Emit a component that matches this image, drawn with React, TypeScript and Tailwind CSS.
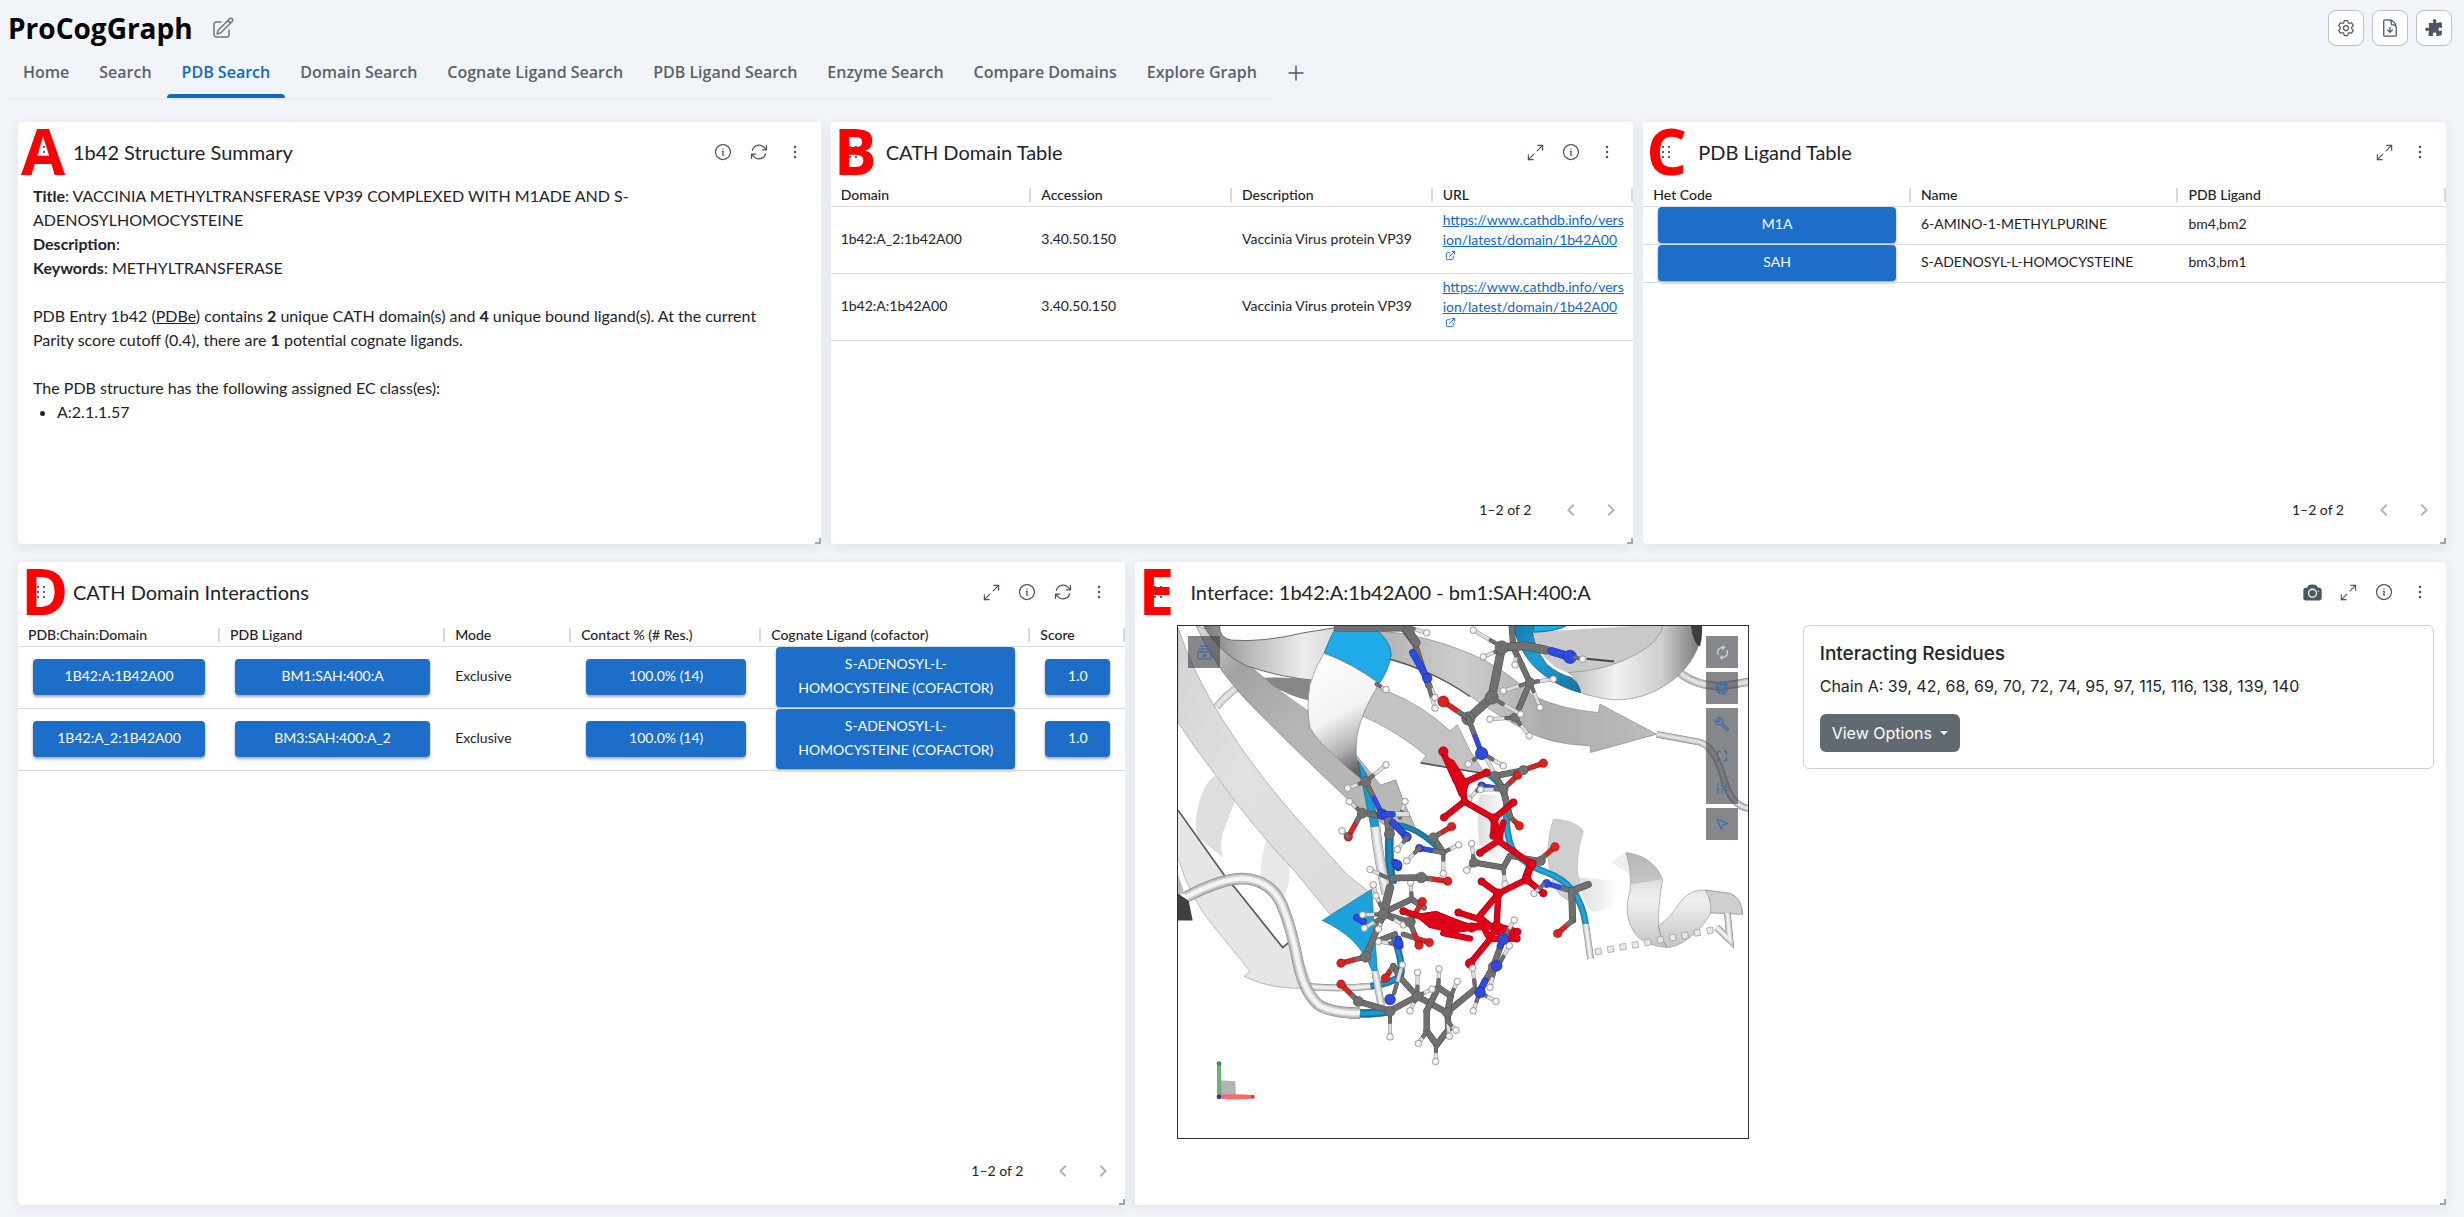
import React from 'react';
import {
  HiOutlineArrowPath,
  HiOutlinePencilSquare,
  HiOutlineCog6Tooth,
  HiOutlineDocumentArrowDown,
  HiPuzzlePiece,
  HiCamera,
  HiOutlineInformationCircle,
  HiEllipsisVertical,
} from 'react-icons/hi2';
import {
  MdAutorenew,
  MdCamera,
  MdOutlineBuild,
  MdFullscreen,
  MdOutlineSubscriptions,
  MdChevronLeft,
  MdChevronRight,
} from 'react-icons/md';
import { Maximize2, ExternalLink, Plus, SlidersVertical, MousePointer2 } from 'lucide-react';

/* ---------- page header ---------- */

const TABS = [
  'Home',
  'Search',
  'PDB Search',
  'Domain Search',
  'Cognate Ligand Search',
  'PDB Ligand Search',
  'Enzyme Search',
  'Compare Domains',
  'Explore Graph',
];

function ToolButton({ label, children }: { label: string; children: React.ReactNode }) {
  return (
    <button
      aria-label={label}
      className="flex size-9 items-center justify-center rounded-lg border border-[#bbc0c7] bg-white text-[#4d5661]"
    >
      {children}
    </button>
  );
}

function Header() {
  return (
    <header className="font-['Open_Sans',sans-serif]">
      <div className="flex h-[46px] items-end justify-between pl-2 pr-3">
        <div className="flex items-center gap-[18px]">
          <h1 className="text-[28px] leading-9 font-bold text-black">ProCogGraph</h1>
          <button aria-label="Edit title" className="text-[#6f757e]">
            <HiOutlinePencilSquare size={24} />
          </button>
        </div>
        <div className="flex gap-2">
          <ToolButton label="Settings">
            <HiOutlineCog6Tooth size={20} />
          </ToolButton>
          <ToolButton label="Download">
            <HiOutlineDocumentArrowDown size={20} />
          </ToolButton>
          <ToolButton label="Extensions">
            <HiPuzzlePiece size={20} />
          </ToolButton>
        </div>
      </div>
      <nav className="flex h-[54px] items-stretch pl-2">
        <div className="flex border-b-2 border-[#e9edf1]">
          {TABS.map((t) => (
            <button
              key={t}
              className={
                t === 'PDB Search'
                  ? 'relative px-[15px] text-base font-semibold text-[#1068cb]'
                  : 'relative px-[15px] text-base font-semibold text-[#59616c]'
              }
            >
              {t}
              {t === 'PDB Search' && (
                <span className="absolute inset-x-0 bottom-0 h-1 rounded-t-sm bg-[#1068cb]" />
              )}
            </button>
          ))}
        </div>
        <button aria-label="Add page" className="px-3 text-[#4d5661]">
          <Plus size={24} strokeWidth={1.5} />
        </button>
      </nav>
    </header>
  );
}

/* ---------- cards ---------- */

type Tool = 'camera' | 'expand' | 'info' | 'refresh' | 'menu';

const TOOL_ICON: Record<Tool, React.ReactNode> = {
  camera: <HiCamera size={21} />,
  expand: <Maximize2 size={19} strokeWidth={1.5} />,
  info: <HiOutlineInformationCircle size={20} />,
  refresh: <HiOutlineArrowPath size={20} />,
  menu: <HiEllipsisVertical size={20} />,
};

function DragDots() {
  return (
    <svg width="12" height="16" viewBox="0 0 12 16" className="fill-[#5c646e]" aria-hidden="true">
      {[2, 7, 12].map((y) => (
        <React.Fragment key={y}>
          <rect x="2" y={y} width="2" height="2" />
          <rect x="8" y={y} width="2" height="2" />
        </React.Fragment>
      ))}
    </svg>
  );
}

function Card({
  letter,
  title,
  tools,
  className,
  children,
}: {
  letter: string;
  title: string;
  tools: Tool[];
  className: string;
  children: React.ReactNode;
}) {
  return (
    <section
      className={`relative flex flex-col rounded bg-white text-[#1e2229] shadow-[0_3px_10px_2px_rgba(60,70,90,0.07)] ${className}`}
    >
      <div className="mb-0.5 flex h-[60px] items-center pr-2">
        <div className="flex w-[55px] justify-center pr-[10px]">
          <DragDots />
        </div>
        <h2 className="flex-1 text-xl">{title}</h2>
        {tools.map((t) => (
          <button
            key={t}
            aria-label={t}
            className="flex size-9 items-center justify-center text-[#4d5661]"
          >
            {TOOL_ICON[t]}
          </button>
        ))}
      </div>
      <span className="absolute top-[3px] left-[3px] font-['Open_Sans',sans-serif] text-[64px] leading-[52px] font-bold text-[#ff0000]">
        {letter}
      </span>
      {children}
      <span className="absolute right-0 bottom-0 size-[6px] border-r-2 border-b-2 border-[#a3a6aa]" />
    </section>
  );
}

function Pager() {
  return (
    <div className="mt-auto flex h-[68px] items-center justify-end pr-0.5 text-sm">
      <span className="mr-5">1–2 of 2</span>
      <button aria-label="Previous page" className="flex size-10 items-center justify-center text-[#b4b4b4]">
        <MdChevronLeft size={24} />
      </button>
      <button aria-label="Next page" className="flex size-10 items-center justify-center text-[#b4b4b4]">
        <MdChevronRight size={24} />
      </button>
    </div>
  );
}

function Table({
  cols,
  rowClass,
  rows,
}: {
  cols: { name: string; width: string }[];
  rowClass: string;
  rows: React.ReactNode[][];
}) {
  return (
    <table className="w-full table-fixed border-collapse text-left text-sm">
      <thead>
        <tr className="h-[22px] border-b border-[#dcdcdc]">
          {cols.map((c) => (
            <th key={c.name} className={`p-0 font-medium ${c.width}`}>
              <div className="flex h-[14px] items-center border-r-2 border-[#d9d9d9] pl-[10px] whitespace-nowrap">
                {c.name}
              </div>
            </th>
          ))}
        </tr>
      </thead>
      <tbody>
        {rows.map((r, i) => (
          <tr key={i} className={`border-b border-[#dcdcdc] ${rowClass}`}>
            {r.map((cell, j) => (
              <td key={j} className="p-0 align-middle">
                {cell}
              </td>
            ))}
          </tr>
        ))}
      </tbody>
    </table>
  );
}

function Txt({ children }: { children: React.ReactNode }) {
  return <div className="px-[10px] pb-0.5">{children}</div>;
}

function Btn({ children }: { children: React.ReactNode }) {
  return (
    <div className="px-[15px]">
      <button className="block w-full rounded bg-[#1c6ec9] px-4 pt-[5px] pb-[7px] text-center leading-6 text-white shadow-[0_2px_3px_rgba(0,0,0,0.35)]">
        {children}
      </button>
    </div>
  );
}

function DomainLink() {
  return (
    <div className="pb-2 pl-[10px]">
      <a href="https://www.cathdb.info/version/latest/domain/1b42A00" className="block text-[#1068cb]">
        <span className="block leading-5 underline">
          https://www.cathdb.info/vers
          <br />
          ion/latest/domain/1b42A00
        </span>
        <ExternalLink size={11} className="ml-0.5" />
      </a>
    </div>
  );
}

/* ---------- 3D structure drawing ---------- */

type Seg = [number, number, number, number];
type Dot = [number, number];

const C = '#707070';
const N = '#2f4ae0';
const O = '#dd2020';
const H = '#dedede';
const L = '#e00018';

function Bonds({ color, edge, w, segs }: { color: string; edge: string; w: number; segs: Seg[] }) {
  return (
    <g strokeLinecap="round">
      {segs.map(([a, b, c, d], i) => (
        <line key={i} x1={a} y1={b} x2={c} y2={d} stroke={edge} strokeWidth={w + 3} />
      ))}
      {segs.map(([a, b, c, d], i) => (
        <line key={i} x1={a} y1={b} x2={c} y2={d} stroke={color} strokeWidth={w} />
      ))}
    </g>
  );
}

function Balls({ color, edge, r, at }: { color: string; edge: string; r: number; at: Dot[] }) {
  return (
    <g fill={color} stroke={edge} strokeWidth={2}>
      {at.map(([x, y], i) => (
        <circle key={i} cx={x} cy={y} r={r} />
      ))}
    </g>
  );
}

/* a bond from carbon to a hydrogen: grey near the carbon, pale towards the hydrogen at the far end */
function Hyd({ segs }: { segs: Seg[] }) {
  return (
    <>
      <Bonds color={H} edge="#8a8a8a" w={9} segs={segs} />
      <Bonds
        color={C}
        edge="#555555"
        w={9}
        segs={segs.map(([a, b, c, d]) => [a, b, a + (c - a) * 0.35, b + (d - b) * 0.35] as Seg)}
      />
      <Balls color="#ececec" edge="#777" r={10} at={segs.map((s) => [s[2], s[3]] as Dot)} />
      <Balls color="#fff" edge="none" r={4} at={segs.map((s) => [s[2] - 1, s[3] - 1] as Dot)} />
    </>
  );
}

/* a bond from carbon to another element, coloured half and half */
function Hetero({ color, segs, r = 13 }: { color: string; segs: Seg[]; r?: number }) {
  return (
    <>
      <Bonds color={C} edge="#4a4a4a" w={13} segs={segs} />
      <Bonds
        color={color}
        edge="none"
        w={14}
        segs={segs.map(([a, b, c, d]) => [(a + c) / 2, (b + d) / 2, c, d] as Seg)}
      />
      <Balls color={color} edge="#0006" r={r} at={segs.map((s) => [s[2], s[3]] as Dot)} />
    </>
  );
}

function Tube({ d, w, color = '#bdbdbd', light = '#f0f0f0' }: { d: string; w: number; color?: string; light?: string }) {
  return (
    <g fill="none">
      <path d={d} stroke="#7c7c7c" strokeWidth={w + 2} />
      <path d={d} stroke={color} strokeWidth={w} />
      <path d={d} stroke={light} strokeWidth={w * 0.7} opacity="0.5" />
      <path d={d} stroke={light} strokeWidth={w * 0.4} />
    </g>
  );
}

const DASHES: Dot[] = [
  [1285, 1002], [1322, 995], [1359, 988], [1396, 982], [1433, 975],
  [1471, 967], [1508, 960], [1545, 954], [1582, 946], [1620, 939],
];

function Structure() {
  return (
    <svg viewBox="24 24 1710 1539" preserveAspectRatio="xMidYMid slice" className="block size-full" role="img" aria-label="Protein interface">
      <defs>
        <linearGradient id="gA" x1="0" y1="0" x2="1" y2="1">
          <stop offset="0" stopColor="#d2d2d2" />
          <stop offset="0.4" stopColor="#e0e0e0" />
          <stop offset="1" stopColor="#dcdcdc" />
        </linearGradient>
        <linearGradient id="gB" x1="0" y1="0" x2="1" y2="1">
          <stop offset="0" stopColor="#dcdcdc" />
          <stop offset="0.2" stopColor="#a2a2a2" />
          <stop offset="0.45" stopColor="#b4b4b4" />
          <stop offset="1" stopColor="#b9b9b9" />
        </linearGradient>
        <linearGradient id="gC" x1="0" y1="0" x2="1" y2="0">
          <stop offset="0" stopColor="#777" />
          <stop offset="0.3" stopColor="#b4b4b4" />
          <stop offset="0.75" stopColor="#ececec" />
          <stop offset="1" stopColor="#d8d8d8" />
        </linearGradient>
        <linearGradient id="gD" x1="0" y1="0" x2="0.3" y2="1">
          <stop offset="0" stopColor="#ffffff" />
          <stop offset="0.55" stopColor="#f3f3f3" />
          <stop offset="0.82" stopColor="#b0b0b0" />
          <stop offset="1" stopColor="#666" />
        </linearGradient>
        <linearGradient id="gE" x1="0" y1="0" x2="1" y2="0">
          <stop offset="0" stopColor="#bcbcbc" />
          <stop offset="0.35" stopColor="#f2f2f2" />
          <stop offset="0.7" stopColor="#cfcfcf" />
          <stop offset="1" stopColor="#747474" />
        </linearGradient>
        <linearGradient id="gF" x1="0" y1="0" x2="1" y2="0">
          <stop offset="0" stopColor="#b4b4b4" />
          <stop offset="0.3" stopColor="#cdcdcd" />
          <stop offset="0.6" stopColor="#adadad" />
          <stop offset="1" stopColor="#bdbdbd" />
        </linearGradient>
        <linearGradient id="gG" x1="0" y1="0" x2="0" y2="1">
          <stop offset="0" stopColor="#c4c4c4" />
          <stop offset="0.5" stopColor="#f0f0f0" />
          <stop offset="1" stopColor="#c4c4c4" />
        </linearGradient>
        <linearGradient id="gBlue" x1="0" y1="0" x2="1" y2="1">
          <stop offset="0" stopColor="#1779a8" />
          <stop offset="0.4" stopColor="#1c9fdb" />
          <stop offset="1" stopColor="#15739f" />
        </linearGradient>
        <linearGradient id="gFade" x1="0" y1="0" x2="1" y2="0">
          <stop offset="0" stopColor="#ddd" />
          <stop offset="1" stopColor="#fff" />
        </linearGradient>
      </defs>
      <rect x="24" y="24" width="1710" height="1539" fill="#fff" />

      {/* distant ribbon fragments */}
      <path d="M135 475Q95 500 80 590Q72 640 85 660L158 720Q145 670 168 620Q188 570 197 545Z" fill="#dedede" />
      <path d="M290 665Q270 720 272 790L345 836Q362 790 358 745Z" fill="#e8e8e8" />
      <path d="M928 530Q918 610 928 680Q960 720 1010 735L1012 530Z" fill="url(#gFade)" />
      <path d="M1225 780Q1240 870 1270 883Q1320 880 1345 840L1340 790Z" fill="url(#gFade)" />
      <Tube d="M140 268Q170 232 205 208" w={20} color="#cfcfcf" light="#e4e4e4" />

      {/* lower left strand with arrow head */}
      <path d="M24 578L190 805L340 990L378 965L432 1112Q300 1122 222 1076L240 1062L150 950Q60 850 24 720Z" fill="#e6e6e6" />
      <path d="M24 578L165 776L190 805L338 990L360 972" fill="none" stroke="#585858" strokeWidth="5" />
      <path d="M24 770L44 830L24 830Z" fill="#bbb" />
      <path d="M24 720Q60 850 150 950L240 1062L222 1076Q300 1118 432 1112" fill="none" stroke="#a5a5a5" strokeWidth="2" />

      {/* dark sheet and arrow */}
      <path d="M270 182Q350 175 430 190L420 250Q350 235 270 182Z" fill="#868686" />
      <path d="M78 24L150 50Q250 170 420 285L560 415L632 503L677 487L700 550L740 640L640 620L530 542Q400 420 290 310Q140 170 78 24Z" fill="url(#gB)" stroke="#7d7d7d" strokeWidth="2" />

      {/* long pale strand */}
      <path d="M24 30Q70 170 160 310Q260 470 400 625L530 770L605 830L480 890L375 762Q250 630 150 490Q80 400 24 315Z" fill="url(#gA)" stroke="#9a9a9a" strokeWidth="2" />

      {/* middle strands */}
      <path d="M580 200L655 222Q760 265 840 340L862 322L900 400L945 468L752 436L768 414Q680 340 570 292Z" fill="#c3c3c3" stroke="#8a8a8a" strokeWidth="2" />
      <path d="M752 436L905 462L945 468" fill="none" stroke="#555" strokeWidth="5" />
      <path d="M630 40Q760 50 900 108Q1000 150 1090 235Q1170 275 1285 285L1290 260L1460 350L1262 405L1260 385Q1130 380 1060 335Q960 280 900 235Q780 155 640 122Z" fill="url(#gF)" stroke="#858585" strokeWidth="2" />
      <path d="M650 122Q790 160 900 237" fill="none" stroke="#555" strokeWidth="4" />

      {/* upper left helix turn */}
      <path d="M100 24L148 24Q148 62 185 68Q280 75 400 46L500 30L445 190Q330 180 230 145Q150 110 100 24Z" fill="url(#gC)" stroke="#6b6b6b" strokeWidth="3" />
      <path d="M462 107Q480 60 500 24L604 24Q664 70 664 112Q655 160 628 198Q550 140 462 107Z" fill="#1faae8" stroke="#14648c" strokeWidth="2" />
      <path d="M462 107Q550 140 628 198Q578 275 562 350Q555 410 562 430L592 500Q530 450 500 420Q440 370 420 330Q408 270 420 200Q435 150 462 107Z" fill="url(#gD)" stroke="#858585" strokeWidth="2" />

      {/* upper right helix */}
      <path d="M1090 44L1410 24L1480 24Q1475 70 1400 110Q1310 160 1200 168Q1110 140 1090 44Z" fill="#c9c9c9" />
      <path d="M1232 225Q1220 180 1195 165Q1310 160 1400 110Q1472 70 1478 24L1595 24Q1598 100 1530 170Q1440 250 1330 247Q1270 240 1232 225Z" fill="url(#gE)" stroke="#8a8a8a" strokeWidth="2" />
      <path d="M1563 24L1596 24Q1598 60 1590 86Q1570 80 1563 24Z" fill="#3c3c3c" />
      <path d="M1090 24L1190 24Q1160 42 1092 44Z" fill="#1faae8" stroke="#14648c" strokeWidth="3" />
      <path d="M1028 24L1088 24Q1085 80 1130 140Q1165 170 1205 180Q1228 200 1232 226Q1150 205 1090 145Q1045 95 1028 24Z" fill="url(#gBlue)" stroke="#105373" strokeWidth="2" />

      {/* right hand tubes */}
      <Tube d="M1532 168Q1580 205 1650 206Q1700 200 1740 192" w={22} color="#b5b5b5" light="#e2e2e2" />
      <Tube d="M1460 350L1590 374Q1635 390 1660 480Q1685 570 1740 573" w={18} color="#b5b5b5" light="#e2e2e2" />

      {/* right helix */}
      <path d="M1150 605Q1215 608 1240 640Q1212 730 1228 800L1228 860Q1155 845 1145 780Q1120 690 1150 605Z" fill="#cfcfcf" stroke="#b5b5b5" strokeWidth="2" />
      <path d="M1325 735Q1345 715 1368 705L1380 770Z" fill="#eee" />
      <path d="M1368 705Q1450 715 1478 785Q1462 880 1466 925Q1500 900 1530 855Q1560 812 1610 818L1680 828Q1715 840 1718 890L1622 886Q1600 930 1560 960Q1520 990 1490 990Q1430 985 1400 955Q1355 900 1380 820Q1385 760 1368 705Z" fill="url(#gG)" stroke="#9a9a9a" strokeWidth="2" />
      <path d="M1368 705Q1450 715 1478 785L1384 800Q1380 750 1368 705Z" fill="#a9a9a9" opacity="0.5" />
      <path d="M1606 818Q1625 850 1622 886L1718 890Q1715 840 1680 828Z" fill="#cfcfcf" stroke="#8f8f8f" strokeWidth="2" />
      <path d="M1466 925Q1470 960 1490 988" fill="none" stroke="#999" strokeWidth="3" />
      <Tube d="M1672 886L1680 968L1640 930" w={18} />
      {DASHES.map(([x, y]) => (
        <rect key={x} x={x - 9} y={y - 9} width="18" height="18" fill="#e9e9e9" stroke="#9a9a9a" strokeWidth="2" transform={`rotate(-10 ${x} ${y})`} />
      ))}

      {/* lower left coils */}
      <path d="M24 828L56 850L68 909L24 909Z" fill="#404040" />
      <Tube d="M420 1108Q520 1114 602 1106" w={19} />
      <Tube d="M602 1106Q660 1100 692 1075Q700 1030 668 950" w={19} color="#13709d" light="#1c97cf" />
      <Tube d="M50 838Q150 785 215 783Q300 785 335 860Q365 930 385 1040Q405 1130 450 1165Q490 1187 570 1187" w={32} color="#b3b3b3" light="#f4f4f4" />
      <Tube d="M570 1187Q610 1190 662 1180" w={24} color="#13709d" light="#1c97cf" />

      {/* blue contact segments */}
      <path d="M457 909L605 815L622 1062L606 1060Q570 960 457 909Z" fill="#1ea2dc" stroke="#14648c" strokeWidth="2" />
      <Tube d="M615 1062L634 1165" w={20} />
      <path d="M564 430L590 470L628 628L603 630Z" fill="#1b9ad2" stroke="#14648c" strokeWidth="2" />
      <Tube d="M658 650Q655 740 668 800" w={24} color="#13709d" light="#1c86b8" />
      <Tube d="M616 628Q625 720 650 830" w={28} color="#c4c4c4" />
      <Tube d="M664 622Q740 620 820 708" w={16} color="#13709d" light="#1c86b8" />
      <Tube d="M940 462Q1000 490 1010 560Q1005 640 1025 690Q1050 735 1130 765Q1230 800 1247 920" w={18} color="#1484b8" light="#1fa8e2" />
      <Tube d="M1247 920L1262 1024" w={18} />

      {/* residue sticks, back layer */}
      <Bonds color={C} edge="#444" w={15} segs={[
        [500, 33, 700, 33], [700, 33, 735, 80], [735, 80, 775, 205], [1025, 30, 1030, 90],
        [1030, 90, 1080, 195], [1080, 195, 1035, 300], [575, 585, 655, 600], [820, 705, 790, 660],
        [912, 735, 1000, 750], [1000, 750, 1020, 715], [1020, 715, 1108, 730], [640, 885, 725, 845],
        [725, 845, 762, 870], [625, 970, 675, 950], [742, 1136, 690, 1080], [690, 1080, 670, 1045],
      ]} />
      <Bonds color={C} edge="#444" w={24} segs={[[712, 36, 738, 76], [655, 600, 660, 648]]} />
      <Hyd segs={[
        [710, 28, 770, 46], [620, 200, 648, 216], [775, 190, 795, 240], [778, 215, 795, 272],
        [1080, 195, 1000, 220], [1080, 195, 1150, 185], [1080, 195, 1110, 270], [1035, 300, 960, 305],
        [1035, 300, 1078, 355], [1040, 100, 1035, 142], [995, 95, 940, 118], [575, 585, 538, 552],
        [690, 600, 705, 552], [820, 705, 866, 682], [820, 705, 820, 768], [912, 735, 905, 678],
        [912, 735, 890, 758], [1000, 750, 1005, 800], [650, 780, 600, 756], [725, 845, 722, 795],
        [625, 850, 610, 802], [680, 980, 625, 972],
      ]} />
      <Bonds color={N} edge="#1c2c90" w={18} segs={[[728, 105, 770, 180], [668, 615, 712, 660], [675, 735, 685, 750], [560, 900, 580, 912], [685, 965, 690, 985]]} />
      <Balls color={N} edge="#1c2c90" r={14} at={[[772, 182], [710, 658], [682, 742], [685, 978]]} />
      <Hetero color={O} segs={[[575, 585, 535, 658], [790, 660, 845, 627], [700, 950, 778, 975], [670, 1045, 646, 1082], [1108, 730, 1155, 688], [1020, 598, 1048, 625]]} />
      <Hetero color={N} segs={[[820, 705, 748, 692], [1000, 515, 935, 505]]} r={12} />
      <Hyd segs={[[535, 658, 516, 640], [712, 660, 682, 696], [748, 692, 710, 730], [935, 505, 896, 545]]} />
      <Balls color={C} edge="#555" r={14} at={[[790, 660], [1080, 195], [1035, 300], [912, 735], [1112, 730]]} />

      {/* upper chain */}
      <Bonds color={C} edge="#4a4a4a" w={23} segs={[[995, 90, 965, 240], [965, 240, 895, 303], [995, 90, 1065, 85], [1065, 85, 1130, 98]]} />
      <Bonds color={N} edge="#1c2c90" w={22} segs={[[1145, 101, 1195, 116]]} />
      <Balls color={N} edge="#1c2c90" r={20} at={[[1200, 118]]} />
      <Balls color={C} edge="#555" r={20} at={[[995, 90], [965, 240], [895, 303]]} />
      <path d="M1250 124L1332 132" stroke="#444" strokeWidth="6" />
      <Hyd segs={[[990, 85, 910, 38], [1215, 120, 1238, 125], [970, 243, 1052, 290]]} />
      <Hetero color={O} segs={[[895, 303, 820, 252]]} r={17} />
      <Hetero color={N} segs={[[895, 303, 935, 408]]} r={18} />
      <Bonds color={C} edge="#444" w={16} segs={[[975, 475, 1000, 515], [1000, 515, 1020, 598], [975, 475, 1065, 458]]} />
      <Hetero color={O} segs={[[1040, 465, 1120, 437], [1000, 515, 1043, 473]]} />
      <Bonds color={H} edge="#8c8c8c" w={9} segs={[[945, 415, 972, 465]]} />
      <Hyd segs={[[920, 420, 895, 440], [950, 415, 1000, 445], [1000, 515, 932, 516]]} />
      <Balls color={C} edge="#555" r={14} at={[[975, 475], [1000, 515], [1060, 458]]} />
      <Balls color={N} edge="#1c2c90" r={18} at={[[935, 408]]} />

      {/* left residues */}
      <Hetero color={N} segs={[[587, 492, 636, 590]]} r={16} />
      <Balls color={C} edge="#555" r={15} at={[[658, 650], [577, 587]]} />
      <Bonds color={C} edge="#4a4a4a" w={22} segs={[[660, 810, 640, 890]]} />
      <Hyd segs={[[587, 492, 648, 442], [587, 492, 533, 512]]} />
      <Bonds color={H} edge="#8a8a8a" w={13} segs={[[655, 590, 712, 590]]} />
      <Bonds color={N} edge="#1c2c90" w={15} segs={[[640, 590, 668, 590]]} />
      <Balls color={C} edge="#555" r={15} at={[[587, 492]]} />
      <Bonds color={C} edge="#4a4a4a" w={17} segs={[[665, 782, 752, 780], [640, 890, 587, 1018], [640, 890, 718, 915]]} />
      <Hetero color={O} segs={[[752, 780, 833, 791], [720, 915, 757, 852], [720, 915, 747, 983], [587, 1018, 513, 1037]]} />
      <Hyd segs={[[640, 890, 578, 892], [635, 900, 583, 932], [640, 900, 625, 935], [650, 895, 700, 922], [635, 870, 618, 835]]} />
      <Balls color={C} edge="#555" r={16} at={[[754, 780], [640, 890], [587, 1018], [720, 913]]} />

      {/* ligand */}
      <Bonds color={L} edge="#96000f" w={16} segs={[
        [818, 402, 858, 490], [845, 435, 880, 490], [835, 430, 875, 530], [858, 490, 890, 492], [890, 492, 950, 465],
        [858, 490, 880, 520], [890, 492, 880, 520], [880, 520, 883, 552], [883, 552, 822, 600], [883, 552, 972, 603],
        [972, 603, 1030, 555], [972, 603, 970, 655], [1000, 615, 985, 670], [972, 603, 990, 668], [985, 670, 930, 706], [985, 670, 1085, 740],
        [1085, 740, 1070, 786], [1078, 745, 1066, 780], [1070, 786, 985, 828], [985, 828, 935, 792], [1070, 786, 1120, 827],
        [985, 828, 925, 900], [985, 828, 980, 925], [925, 900, 960, 965], [980, 925, 1042, 943], [980, 925, 905, 930],
        [980, 925, 960, 965], [960, 965, 1040, 963], [960, 965, 900, 1038], [700, 881, 752, 897], [752, 897, 798, 890],
        [798, 890, 860, 915], [860, 915, 905, 930], [752, 897, 782, 922], [782, 922, 848, 938], [848, 938, 905, 930],
        [865, 885, 928, 905], [820, 947, 900, 963], [848, 938, 925, 925], [775, 905, 850, 925], [985, 935, 1038, 950], [930, 900, 985, 945],
      ]} />
      <Balls color={L} edge="#96000f" r={11} at={[[950, 465], [822, 600], [1030, 555], [930, 706], [935, 792], [1120, 827], [1042, 943], [1040, 963], [700, 881], [865, 885], [970, 655], [883, 552]]} />
      <Balls color={L} edge="#96000f" r={14} at={[[820, 402], [972, 603], [1085, 740], [1070, 786], [985, 828], [980, 925], [900, 1038], [905, 930]]} />

      {/* right residue */}
      <Hetero color={N} segs={[[1205, 820, 1130, 798]]} />
      <Bonds color={C} edge="#4a4a4a" w={18} segs={[[1205, 820, 1255, 801], [1205, 820, 1208, 908]]} />
      <Hetero color={O} segs={[[1208, 908, 1163, 948]]} />
      <Hyd segs={[[1120, 802, 1092, 828]]} />

      {/* lower chain */}
      <Bonds color={C} edge="#4a4a4a" w={16} segs={[
        [1000, 965, 968, 1050], [968, 1050, 930, 1120], [915, 1115, 830, 1185], [830, 1185, 742, 1136],
        [742, 1136, 660, 1180], [660, 1180, 565, 1152],
      ]} />
      <Bonds color={C} edge="#444" w={16} segs={[
        [805, 1110, 842, 1135], [842, 1135, 832, 1185], [832, 1185, 836, 1235], [836, 1235, 800, 1282],
        [800, 1282, 770, 1240], [770, 1240, 770, 1180], [770, 1180, 805, 1110],
      ]} />
      <Bonds color={N} edge="#1c2c90" w={17} segs={[[990, 985, 1000, 965], [945, 1090, 930, 1122]]} />
      <Hetero color={O} segs={[[565, 1152, 513, 1100]]} />
      <Hyd segs={[
        [1005, 955, 1033, 908], [990, 1035, 1018, 985], [975, 1055, 960, 1110], [930, 1125, 978, 1152],
        [925, 1135, 910, 1180], [915, 1108, 908, 1052], [742, 1130, 743, 1065], [742, 1136, 720, 1180],
        [830, 1190, 838, 1256], [835, 1215, 858, 1238], [660, 1190, 660, 1258], [672, 1128, 697, 1042],
        [742, 1136, 786, 1115], [805, 1105, 807, 1054], [845, 1130, 862, 1092], [798, 1285, 797, 1332], [768, 1245, 745, 1278],
      ]} />
      <Balls color={C} edge="#555" r={15} at={[[970, 1048], [832, 1185], [742, 1136], [565, 1152], [660, 1182]]} />
      <Balls color={N} edge="#1c2c90" r={16} at={[[1000, 965], [980, 1045], [930, 1125], [660, 1146]]} />

      {/* axis marker */}
      <path d="M148 1388L196 1391L198 1436L148 1436Z" fill="#b4b4b4" />
      <path d="M141 1338L153 1338L155 1436L141 1436Z" fill="#6fb173" />
      <circle cx="147" cy="1338" r="7" fill="#3a9440" />
      <path d="M147 1431Q210 1428 250 1433L250 1443Q210 1448 147 1444Z" fill="#f96a6a" />
      <circle cx="248" cy="1438" r="6" fill="#e03a3f" />
      <circle cx="147" cy="1438" r="7" fill="#2f35b0" />
    </svg>
  );
}

const VBTN = 'flex size-8 items-center justify-center text-[#426fa8]';
const VBG = 'bg-[rgba(60,62,66,0.62)]';

function Viewer() {
  return (
    <div className="relative h-[514px] w-[572px] border border-[#2c2e3b]">
      <Structure />
      <button aria-label="State snapshots" className={`absolute top-[10px] left-[10px] ${VBTN} ${VBG}`}>
        <MdOutlineSubscriptions size={17} />
      </button>
      <div className="absolute top-[10px] right-[10px] flex flex-col gap-1">
        <button aria-label="Reset camera" className={`${VBTN} ${VBG}`}>
          <MdAutorenew size={17} className="text-[#c5d3e4]" />
        </button>
        <button aria-label="Screenshot" className={`${VBTN} ${VBG}`}>
          <MdCamera size={16} />
        </button>
        <div className={VBG}>
          <button aria-label="Controls" className={VBTN}>
            <MdOutlineBuild size={16} />
          </button>
          <button aria-label="Expanded viewport" className={VBTN}>
            <MdFullscreen size={18} />
          </button>
          <button aria-label="Settings panel" className={VBTN}>
            <SlidersVertical size={14} />
          </button>
        </div>
        <button aria-label="Selection mode" className={`${VBTN} ${VBG}`}>
          <MousePointer2 size={14} />
        </button>
      </div>
    </div>
  );
}

/* ---------- page ---------- */

export default function App() {
  return (
    <div className="flex min-h-screen flex-col bg-[#f1f5f9] font-['Lato',sans-serif]">
      <Header />
      <main className="mt-[22px] grid flex-1 grid-cols-[repeat(24,minmax(0,1fr))] grid-rows-[422fr_642fr] gap-x-[10px] gap-y-[18px] px-[18px] pb-3">
        <Card letter="A" title="1b42 Structure Summary" tools={['info', 'refresh', 'menu']} className="col-span-8">
          <div className="px-[15px] text-base leading-6">
            <p>
              <b>Title</b>: VACCINIA METHYLTRANSFERASE VP39 COMPLEXED WITH M1ADE AND S-ADENOSYLHOMOCYSTEINE
            </p>
            <p>
              <b>Description</b>:
            </p>
            <p>
              <b>Keywords</b>: METHYLTRANSFERASE
            </p>
            <p className="mt-6">
              PDB Entry 1b42 (
              <a href="https://www.ebi.ac.uk/pdbe/entry/pdb/1b42" className="underline">
                PDBe
              </a>
              ) contains <b>2</b> unique CATH domain(s) and <b>4</b> unique bound ligand(s). At the current
              <br />
              Parity score cutoff (0.4), there are <b>1</b> potential cognate ligands.
            </p>
            <p className="mt-6">The PDB structure has the following assigned EC class(es):</p>
            <ul className="list-disc pl-6">
              <li>A:2.1.1.57</li>
            </ul>
          </div>
        </Card>

        <Card letter="B" title="CATH Domain Table" tools={['expand', 'info', 'menu']} className="col-span-8">
          <Table
            cols={[
              { name: 'Domain', width: 'w-1/4' },
              { name: 'Accession', width: 'w-1/4' },
              { name: 'Description', width: 'w-1/4' },
              { name: 'URL', width: 'w-1/4' },
            ]}
            rowClass="h-[67px]"
            rows={['1b42:A_2:1b42A00', '1b42:A:1b42A00'].map((d) => [
              <Txt>{d}</Txt>,
              <Txt>3.40.50.150</Txt>,
              <Txt>Vaccinia Virus protein VP39</Txt>,
              <DomainLink />,
            ])}
          />
          <Pager />
        </Card>

        <Card letter="C" title="PDB Ligand Table" tools={['expand', 'menu']} className="col-span-8">
          <Table
            cols={[
              { name: 'Het Code', width: 'w-1/3' },
              { name: 'Name', width: 'w-1/3' },
              { name: 'PDB Ligand', width: 'w-1/3' },
            ]}
            rowClass="h-[38px]"
            rows={[
              [<Btn>M1A</Btn>, <Txt>6-AMINO-1-METHYLPURINE</Txt>, <Txt>bm4,bm2</Txt>],
              [<Btn>SAH</Btn>, <Txt>S-ADENOSYL-L-HOMOCYSTEINE</Txt>, <Txt>bm3,bm1</Txt>],
            ]}
          />
          <Pager />
        </Card>

        <Card
          letter="D"
          title="CATH Domain Interactions"
          tools={['expand', 'info', 'refresh', 'menu']}
          className="col-[span_11]"
        >
          <Table
            cols={[
              { name: 'PDB:Chain:Domain', width: 'w-[202px]' },
              { name: 'PDB Ligand', width: 'w-[225px]' },
              { name: 'Mode', width: 'w-[126px]' },
              { name: 'Contact % (# Res.)', width: 'w-[190px]' },
              { name: 'Cognate Ligand (cofactor)', width: 'w-[269px]' },
              { name: 'Score', width: 'w-[95px]' },
            ]}
            rowClass="h-[62px]"
            rows={[
              ['1B42:A:1B42A00', 'BM1:SAH:400:A'],
              ['1B42:A_2:1B42A00', 'BM3:SAH:400:A_2'],
            ].map(([domain, ligand]) => [
              <Btn>{domain}</Btn>,
              <Btn>{ligand}</Btn>,
              <Txt>Exclusive</Txt>,
              <Btn>100.0% (14)</Btn>,
              <Btn>
                S-ADENOSYL-L-
                <br />
                HOMOCYSTEINE (COFACTOR)
              </Btn>,
              <Btn>1.0</Btn>,
            ])}
          />
          <Pager />
        </Card>

        <Card
          letter="E"
          title="Interface: 1b42:A:1b42A00 - bm1:SAH:400:A"
          tools={['camera', 'expand', 'info', 'menu']}
          className="col-[span_13]"
        >
          <div className="grid grid-cols-2 items-start gap-6 px-3 pt-px">
            <div className="flex justify-center">
              <Viewer />
            </div>
            <div className="rounded-md border border-[#cfd2d5] p-4 font-['Inter',sans-serif] text-[#212529]">
              <h3 className="text-[19px] leading-6 font-medium">Interacting Residues</h3>
              <p className="mt-2 text-base leading-6">
                Chain A: 39, 42, 68, 69, 70, 72, 74, 95, 97, 115, 116, 138, 139, 140
              </p>
              <button className="mt-4 flex h-[38px] items-center rounded-md bg-[#626a71] px-3 text-base text-white">
                View Options
                <span className="ml-2 border-x-4 border-t-4 border-x-transparent border-t-white" />
              </button>
            </div>
          </div>
        </Card>
      </main>
    </div>
  );
}
